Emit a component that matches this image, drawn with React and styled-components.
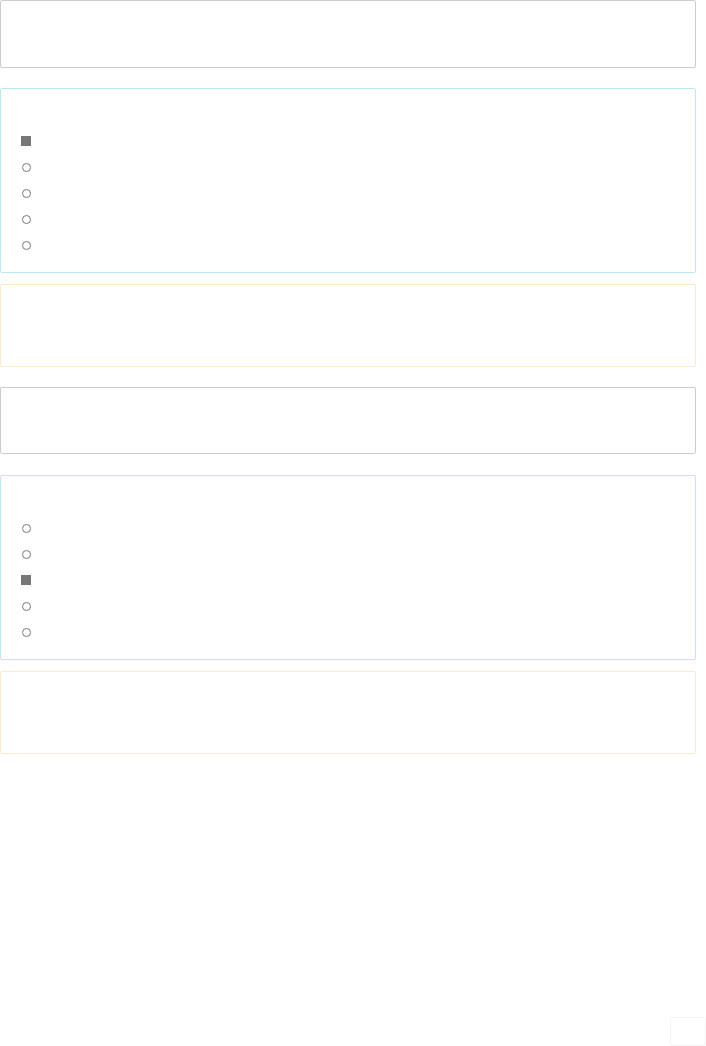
import styled, { createGlobalStyle } from 'styled-components';

const GlobalStyle = createGlobalStyle`
    body {
        margin: 0;
        background: #fff;
        font-family: "Open Sans", "Liberation Sans", sans-serif;
    }
`;

const Page = styled.div`
    width: 696px;
    display: flex;
    flex-direction: column;
`;

const tones = {
    plain: '#cccccc',
    info: '#bce8f1',
    warning: '#faebcc',
};

const Panel = styled.div`
    box-sizing: border-box;
    height: ${p => p.$height}px;
    margin-bottom: ${p => p.$gap}px;
    border: 1px solid ${p => tones[p.$tone]};
    border-radius: 2px;
    background: #fff;
`;

const QuestionPanel = styled.div`
    box-sizing: border-box;
    height: 185px;
    margin-bottom: ${p => p.$gap}px;
    padding: 39px 20px 0 20px;
    border: 1px solid ${tones.info};
    border-radius: 2px;
`;

const Options = styled.ul`
    list-style: none;
    margin: 0;
    padding: 0;
    display: flex;
    flex-direction: column;
`;

const Option = styled.li`
    height: 26px;
    display: flex;
    align-items: center;
    gap: 10px;
    font-size: 13px;
    color: #fff;
`;

const Square = styled.span`
    width: 10px;
    height: 10px;
    background: #777;
`;

const Circle = styled.span`
    box-sizing: border-box;
    width: 9px;
    height: 9px;
    margin-left: 1px;
    border: 1px solid #777;
    border-radius: 50%;
`;

const Corner = styled.div`
    position: fixed;
    right: 0;
    bottom: 0;
    width: 34px;
    height: 27px;
    border: 1px solid #f4f4f4;
    border-radius: 2px;
    background: #fff;
`;

function Question({ picked, gap }) {
    return (
        <QuestionPanel $gap={gap}>
            <Options>
                {[0, 1, 2, 3, 4].map(i => (
                    <Option key={i}>
                        {i === picked ? <Square /> : <Circle />}
                    </Option>
                ))}
            </Options>
        </QuestionPanel>
    );
}

export default function App() {
    return (
        <>
            <GlobalStyle />
            <Page>
                <Panel $tone="plain" $height={68} $gap={20} />
                <Question picked={0} gap={11} />
                <Panel $tone="warning" $height={83} $gap={20} />
                <Panel $tone="plain" $height={67} $gap={21} />
                <Question picked={2} gap={11} />
                <Panel $tone="warning" $height={83} $gap={0} />
            </Page>
            <Corner />
        </>
    );
}
